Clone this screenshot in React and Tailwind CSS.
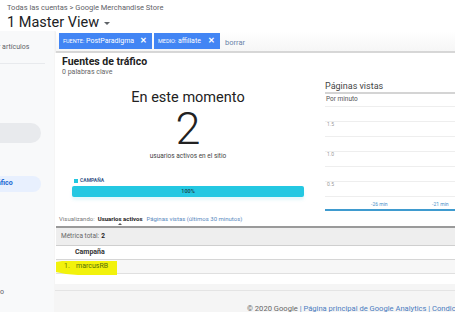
import React from "react";

const font = { fontFamily: "Roboto, 'Liberation Sans', Arial, sans-serif" };

function Chip({ label, value, w }) {
  return (
    <div className={`flex h-[16px] shrink-0 items-center justify-between bg-[#4285f4] pl-[4px] pr-[5px] text-white ${w}`}>
      <span className="whitespace-nowrap text-[7px] leading-none">
        <span className="text-[5.5px]">{label}</span> {value}
      </span>
      <span className="text-[8px] font-bold leading-none">✕</span>
    </div>
  );
}

export default function App() {
  const grid = [0, 1, 2, 3, 4, 5, 6];
  return (
    <div style={font} className="relative h-[312px] w-[455px] overflow-hidden bg-white text-[#202124]">
      {/* Header */}
      <div className="h-[31px] bg-white pl-[7px] pt-[3px]">
        <div className="text-[7.5px] leading-[10px] text-[#5f6368]">Todas las cuentas &gt; Google Merchandise Store</div>
        <div className="mt-[1px] flex items-center text-[14.5px] leading-[17px] text-[#202124]">
          1 Master View
          <span className="ml-[5px] mt-[2px] inline-block h-0 w-0 border-x-[3px] border-t-[3px] border-x-transparent border-t-[#5f6368]" />
        </div>
      </div>

      <div className="flex h-[281px]">
        {/* Sidebar */}
        <div className="relative w-[54px] shrink-0 overflow-hidden bg-[#f8f9fa]">
          <div className="ml-[-2px] mt-[11px] whitespace-nowrap text-[7px] text-[#5f6368]">r artículos</div>
          <div className="mt-[10px] h-px w-[45px] bg-[#e8eaed]" />
          <div className="mt-[59px] h-[20px] w-[41px] rounded-r-full bg-[#e8eaed]" />
          <div className="mt-[33px] flex h-[16px] w-[41px] items-center rounded-r-full bg-[#e8f0fe]">
            <span className="ml-[-3px] text-[7px] font-bold text-[#1967d2]">áfico</span>
          </div>
          <div className="mt-[95px] text-[7px] text-[#5f6368]">o</div>
        </div>

        {/* Main */}
        <div className="flex min-w-0 flex-1 flex-col overflow-hidden bg-[#f5f5f5]">
          {/* Filter bar */}
          <div className="ml-[2px] flex h-[21px] shrink-0 items-center gap-[2px] border-b border-[#d6d6d6] bg-gradient-to-b from-white to-[#f6f6f6] pl-[3px] shadow-[0_1px_1px_rgba(0,0,0,0.12)]">
            <Chip label="FUENTE:" value="PostParadigma" w="w-[93px]" />
            <Chip label="MEDIO:" value="affiliate" w="w-[66px]" />
            <span className="ml-[3px] mt-[3px] text-[7.5px] text-[#6a84a8]">borrar</span>
          </div>

          {/* Card */}
          <div className="ml-[1px] mt-[1px] shrink-0 bg-white">
            <div className="pl-[7px] pt-[3px]">
              <div className="text-[10.5px] font-bold leading-[12px] text-[#222]">Fuentes de tráfico</div>
              <div className="text-[7px] leading-[9px] text-[#666]">0 palabras clave</div>
            </div>

            <div className="flex">
              {/* realtime left */}
              <div className="ml-[17px] w-[232px] shrink-0">
                <div className="mt-[12px] text-center text-[14.5px] leading-[17px] text-[#222]">En este momento</div>
                <div className="mt-0 text-center text-[45px] font-light leading-[46px] text-[#222]">2</div>
                <div className="mt-0 text-center text-[6.5px] leading-[8px] text-[#444]">usuarios activos en el sitio</div>
                <div className="mt-[17px] flex items-center gap-[2px] pl-[2px]">
                  <span className="h-[4px] w-[4px] bg-[#22c7e0]" />
                  <span className="text-[5px] font-bold text-[#3c5a8a]">CAMPAÑA</span>
                </div>
                <div className="mt-[1px] flex h-[11px] items-center justify-center rounded-[2px] bg-[#24c8e2] shadow-[0_3px_3px_rgba(36,200,226,0.12)]">
                  <span className="text-[5.5px] font-medium text-[#1d3b45]">100%</span>
                </div>
              </div>

              {/* right chart */}
              <div className="ml-[21px] flex-1">
                <div className="mt-[4px] text-[9px] leading-[11px] text-[#444]">Páginas vistas</div>
                <div className="mt-0 h-[2px] bg-[#d4d4d4]" />
                <div className="pl-[1px] pt-[1px] text-[6.5px] leading-[8px] text-[#555]">Por minuto</div>
                <div className="relative h-[108px]">
                  {grid.map((i) => (
                    <div key={i} className="absolute left-0 right-0 h-px bg-[#eeeeee]" style={{ top: 3 + i * 15 }} />
                  ))}
                  <span className="absolute left-[2px] top-[18px] text-[5px] text-[#999]">1.5</span>
                  <span className="absolute left-[2px] top-[48px] text-[5px] text-[#999]">1.0</span>
                  <span className="absolute left-[2px] top-[78px] text-[5px] text-[#999]">0.5</span>
                  <span className="absolute left-[46px] top-[98px] text-[5px] text-[#4a90c8]">-26 min</span>
                  <span className="absolute left-[107px] top-[98px] text-[5px] text-[#4a90c8]">-21 min</span>
                  <div className="absolute bottom-0 left-0 right-0 h-[2px] bg-[#3f9bcf]" />
                </div>
              </div>
            </div>

            {/* Visualizando */}
            <div className="mt-[4px] flex items-center gap-[3px] pl-[4px] text-[6px] leading-[8px]">
              <span className="text-[#777]">Visualizando:</span>
              <span className="relative font-bold text-[#222]">
                Usuarios activos
                <span className="absolute left-1/2 top-[8px] h-0 w-0 -translate-x-1/2 border-x-[2px] border-b-[2px] border-x-transparent border-b-[#555]" />
              </span>
              <span className="ml-[1px] text-[#5a8ac0]">Páginas vistas (últimos 30 minutos)</span>
            </div>

            {/* Table */}
            <div className="relative mt-[3px] ml-[1px]">
              <div className="flex h-[20px] items-center border-t-2 border-b border-t-[#9a9a9a] border-b-[#cfcfcf] bg-[#eeeeee] pl-[5px] text-[6.5px]">
                <span className="text-[#666]">Métrica total:</span>
                <span className="ml-[2px] font-bold text-[#222]">2</span>
              </div>
              <div className="flex h-[14px] items-center border-b border-[#d6d6d6] bg-white pl-[19px] text-[7px] font-bold text-[#333]">
                Campaña
              </div>
              <div className="relative flex h-[14px] items-center border-b border-[#e0e0e0] bg-[#f7f7f7] text-[7px]">
                <svg className="absolute left-0 top-0" width="62" height="16" viewBox="0 0 62 16">
                  <path d="M0 2 L6 1 L20 1 L61 1 L61 15 L22 15 L10 14 L0 12 Z" fill="#f2f20c" />
                </svg>
                <span className="relative ml-[8px] w-[12px] text-[#6d7a00]">1.</span>
                <span className="relative text-[#55700a]">marcusRB</span>
              </div>
              <div className="h-[10px] bg-white" />
            </div>
          </div>

          {/* under card */}
          <div className="ml-[1px] mt-[6px] h-px shrink-0 bg-[#e4e4e4]" />
          <div className="mt-[13px] shrink-0 whitespace-nowrap pl-[193px] text-[7.6px] leading-[10px]">
            <span className="text-[#666]">© 2020 Google</span>
            <span className="text-[#4a7cc0]"> | Página principal de Google Analytics | Condiciones</span>
          </div>
        </div>
      </div>
    </div>
  );
}
